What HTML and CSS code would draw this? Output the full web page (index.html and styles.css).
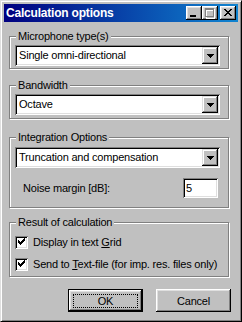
FILE: index.html
```html
<!DOCTYPE html>
<html>
<head>
<meta charset="utf-8">
<title>Calculation options</title>
<link rel="stylesheet" href="styles.css">
</head>
<body>
<div class="window">
  <div class="titlebar">
    <span class="title">Calculation options</span>
    <div class="tb-buttons">
      <span class="tb-btn"><svg width="16" height="14" viewBox="0 0 16 14" shape-rendering="crispEdges"><path d="M4 9h6v2H4z" fill="#000"/></svg></span>
      <span class="tb-btn"><svg width="16" height="14" viewBox="0 0 16 14" shape-rendering="crispEdges"><path d="M4 3h9v10H4z M5 5h7v7H5z" fill="#fff" fill-rule="evenodd"/><path d="M3 2h9v9H3z M4 4h7v6H4z" fill="#808080" fill-rule="evenodd"/></svg></span>
      <span class="tb-btn close"><svg width="16" height="14" viewBox="0 0 16 14" shape-rendering="crispEdges"><path d="M4 3h2v1H4z M10 3h2v1h-2z M5 4h2v1H5z M9 4h2v1H9z M6 5h4v1H6z M7 6h2v1H7z M6 7h4v1H6z M5 8h2v1H5z M9 8h2v1H9z M4 9h2v1H4z M10 9h2v1h-2z" fill="#000"/></svg></span>
    </div>
  </div>
  <div class="content">
    <div class="group g1">
      <span class="group-label">Microphone type(s)</span>
      <div class="combo"><span class="combo-text">Single omni-directional</span><span class="combo-btn"><svg width="7" height="4" viewBox="0 0 7 4" shape-rendering="crispEdges"><path d="M0 0h7v1H0z M1 1h5v1H1z M2 2h3v1H2z M3 3h1v1H3z" fill="#000"/></svg></span></div>
    </div>
    <div class="group g2">
      <span class="group-label">Bandwidth</span>
      <div class="combo"><span class="combo-text">Octave</span><span class="combo-btn"><svg width="7" height="4" viewBox="0 0 7 4" shape-rendering="crispEdges"><path d="M0 0h7v1H0z M1 1h5v1H1z M2 2h3v1H2z M3 3h1v1H3z" fill="#000"/></svg></span></div>
    </div>
    <div class="group g3">
      <span class="group-label">Integration Options</span>
      <div class="combo"><span class="combo-text">Truncation and compensation</span><span class="combo-btn"><svg width="7" height="4" viewBox="0 0 7 4" shape-rendering="crispEdges"><path d="M0 0h7v1H0z M1 1h5v1H1z M2 2h3v1H2z M3 3h1v1H3z" fill="#000"/></svg></span></div>
      <div class="field-row">
        <span class="field-label">Noise margin [dB]:</span>
        <span class="textbox">5</span>
      </div>
    </div>
    <div class="group g4">
      <span class="group-label">Result of calculation</span>
      <div class="check-row">
        <span class="checkbox"><svg width="9" height="9" viewBox="0 0 9 9" shape-rendering="crispEdges"><path d="M1 2h1v3H1z M2 3h1v3H2z M3 4h1v3H3z M4 3h1v3H4z M5 2h1v3H5z M6 1h1v3H6z M7 0h1v3H7z" fill="#000"/></svg></span>
        <span class="check-label">Display in text <u>G</u>rid</span>
      </div>
      <div class="check-row">
        <span class="checkbox"><svg width="9" height="9" viewBox="0 0 9 9" shape-rendering="crispEdges"><path d="M1 2h1v3H1z M2 3h1v3H2z M3 4h1v3H3z M4 3h1v3H4z M5 2h1v3H5z M6 1h1v3H6z M7 0h1v3H7z" fill="#000"/></svg></span>
        <span class="check-label">Send to <u>T</u>ext-file (for imp. res. files only)</span>
      </div>
    </div>
    <div class="button-row">
      <span class="button default"><span class="focus">OK</span></span>
      <span class="button">Cancel</span>
    </div>
  </div>
</div>
</body>
</html>
```
FILE: styles.css
```css
html, body {
  margin: 0;
  padding: 0;
  background: #c0c0c0;
}

body {
  font-family: "Liberation Sans", Arial, sans-serif;
  font-size: 11px;
  letter-spacing: -0.2px;
  color: #000;
}

.window {
  width: 242px;
  height: 322px;
  box-sizing: border-box;
  background: #c0c0c0;
  border: 1px solid;
  border-color: #dfdfdf #000 #000 #dfdfdf;
  box-shadow: inset 1px 1px #fff, inset -1px -1px #808080;
  padding: 3px;
  display: flex;
  flex-direction: column;
}

.titlebar {
  height: 18px;
  flex: none;
  background: linear-gradient(to right, #000080, #1084d0);
  display: flex;
  align-items: center;
  justify-content: space-between;
  padding: 0 2px 0 2px;
}

.title {
  color: #fff;
  font-weight: bold;
  font-size: 12px;
  letter-spacing: -0.2px;
  line-height: 14px;
}

.tb-buttons {
  display: flex;
}

.tb-btn {
  width: 16px;
  height: 14px;
  background: #c0c0c0;
  box-shadow: inset -1px -1px #000, inset 1px 1px #fff, inset -2px -2px #808080, inset 2px 2px #dfdfdf;
  display: block;
}

.tb-btn svg {
  display: block;
}

.tb-btn.close {
  margin-left: 2px;
}

.content {
  display: flex;
  flex-direction: column;
  padding-left: 5px;
}

.group {
  position: relative;
  width: 220px;
  box-sizing: border-box;
  border: 1px solid #808080;
  box-shadow: inset 1px 1px #fff, 1px 1px #fff;
  padding: 8px 0 2px 5px;
}

.group-label {
  position: absolute;
  top: -7px;
  left: 6px;
  padding: 0 2px;
  background: #c0c0c0;
  line-height: 13px;
}

.g1 { margin-top: 14px; }
.g2 { margin-top: 16px; padding-bottom: 3px; }
.g3 { margin-top: 18px; padding-top: 9px; padding-bottom: 9px; }
.g4 { margin-top: 14px; padding-top: 13px; padding-bottom: 5px; }

.combo {
  width: 205px;
  height: 21px;
  box-sizing: border-box;
  background: #fff;
  box-shadow: inset 1px 1px #808080, inset -1px -1px #fff, inset 2px 2px #000, inset -2px -2px #dfdfdf;
  padding: 2px;
  display: flex;
  align-items: center;
}

.combo-text {
  flex: 1;
  padding-left: 2px;
  line-height: 13px;
}

.combo-btn {
  width: 16px;
  height: 17px;
  background: #c0c0c0;
  box-shadow: inset -1px -1px #000, inset 1px 1px #dfdfdf, inset -2px -2px #808080, inset 2px 2px #fff;
  display: flex;
  align-items: center;
  justify-content: center;
}

.combo-btn svg {
  display: block;
}

.field-row {
  display: flex;
  align-items: center;
  margin-top: 10px;
}

.field-label {
  margin-left: 8px;
  width: 160px;
}

.textbox {
  width: 35px;
  height: 20px;
  box-sizing: border-box;
  background: #fff;
  box-shadow: inset 1px 1px #808080, inset -1px -1px #fff, inset 2px 2px #000, inset -2px -2px #dfdfdf;
  padding: 3px 3px;
  line-height: 14px;
}

.check-row {
  display: flex;
  align-items: center;
  height: 13px;
}

.check-row + .check-row {
  margin-top: 9px;
}

.checkbox {
  width: 13px;
  height: 13px;
  box-sizing: border-box;
  background: #fff;
  box-shadow: inset 1px 1px #808080, inset -1px -1px #fff, inset 2px 2px #000, inset -2px -2px #dfdfdf;
  padding: 2px;
  flex: none;
}

.checkbox svg {
  display: block;
}

.check-label {
  margin-left: 5px;
  line-height: 13px;
  white-space: nowrap;
}

.button-row {
  display: flex;
  margin-top: 12px;
  padding-left: 59px;
  gap: 13px;
}

.button {
  width: 75px;
  height: 23px;
  box-sizing: border-box;
  background: #c0c0c0;
  box-shadow: inset -1px -1px #000, inset 1px 1px #fff, inset -2px -2px #808080, inset 2px 2px #dfdfdf;
  display: flex;
  align-items: center;
  justify-content: center;
}

.button.default {
  border: 1px solid #000;
}

.focus {
  width: 65px;
  height: 14px;
  box-sizing: border-box;
  border: 1px dotted #000;
  display: flex;
  align-items: center;
  justify-content: center;
  line-height: 12px;
}
```
